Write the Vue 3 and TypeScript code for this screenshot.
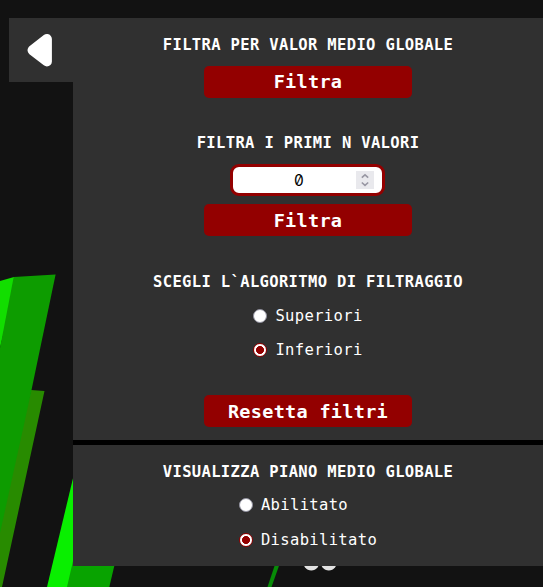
<script setup lang="ts">
import { ref } from 'vue'

const algorithms = ['Superiori', 'Inferiori']
const planeStates = ['Abilitato', 'Disabilitato']
const algorithm = ref('Inferiori')
const plane = ref('Disabilitato')
const count = ref('0')
</script>

<template>
  <main class="page">
    <svg class="scene" viewBox="0 0 543 587" aria-hidden="true">
      <polygon points="0,281 14,277 14,290 0,348" fill="#12de00" />
      <polygon points="31,390 44.5,391 38.2,420 2,587 0,587 0,520" fill="#288b00" />
      <polygon points="13.7,277 55.6,274.5 31.5,390 25,420 0,533 0,348" fill="#0d9c00" />
      <polygon points="74,474 47,587 75,587" fill="#09ef00" />
      <polygon points="73,561 67,587 109.3,587 115,563" fill="#08a300" />
      <polygon points="275.5,563 280,563 271.5,587 267.5,587" fill="#078b07" />
      <ellipse cx="311.3" cy="559.5" rx="9" ry="11" fill="#e2e2e2" />
      <ellipse cx="328.8" cy="559.5" rx="9" ry="11" fill="#e2e2e2" />
    </svg>

    <div class="drawer">
      <button class="toggle" type="button" aria-label="Chiudi">
        <svg width="64" height="64" viewBox="0 0 64 64">
          <path d="M23.5 32.2 37.9 21 37.9 43.4Z" fill="#fff" stroke="#fff" stroke-width="10" stroke-linejoin="round" />
        </svg>
      </button>

      <div class="panel">
        <section class="filters">
          <h2>FILTRA PER VALOR MEDIO GLOBALE</h2>
          <button class="action" type="button">Filtra</button>

          <h2 class="spaced">FILTRA I PRIMI N VALORI</h2>
          <div class="number">
            <input v-model="count" type="text" inputmode="numeric" />
            <span class="spinner">
              <svg width="18" height="18" viewBox="0 0 18 18">
                <path d="M5.8 6.7 9 3.8 12.2 6.7M5.8 11.5 9 14.4 12.2 11.5" fill="none" stroke="#9897a3" stroke-width="1.6" />
              </svg>
            </span>
          </div>
          <button class="action" type="button">Filtra</button>

          <h2 class="spaced algorithm">SCEGLI L`ALGORITMO DI FILTRAGGIO</h2>
          <div class="options">
            <label v-for="item in algorithms" :key="item">
              <input v-model="algorithm" type="radio" name="algorithm" :value="item" />
              <span>{{ item }}</span>
            </label>
          </div>
          <button class="action reset" type="button">Resetta filtri</button>
        </section>

        <section class="plane">
          <h2>VISUALIZZA PIANO MEDIO GLOBALE</h2>
          <div class="options">
            <label v-for="item in planeStates" :key="item">
              <input v-model="plane" type="radio" name="plane" :value="item" />
              <span>{{ item }}</span>
            </label>
          </div>
        </section>
      </div>
    </div>
  </main>
</template>

<style>
body {
  background: #121212;
}
</style>

<style scoped>
.page {
  position: relative;
  box-sizing: border-box;
  height: 587px;
  padding: 18px 0 0 9px;
  overflow: hidden;
  background: #121212;
  color: #fff;
  font-family: "DejaVu Sans Mono", monospace;
}
.scene {
  position: absolute;
  inset: 0;
  width: 543px;
  height: 587px;
}
.drawer {
  position: relative;
  display: flex;
  align-items: flex-start;
}
.toggle {
  flex: none;
  width: 64px;
  height: 64px;
  padding: 0;
  border: 0;
  background: #303030;
}
.toggle svg {
  display: block;
}
.panel {
  flex: 1;
  height: 548px;
  background: #303030;
}
section {
  display: flex;
  flex-direction: column;
  align-items: center;
}
.filters {
  box-sizing: border-box;
  height: 427px;
  padding-top: 16px;
  border-bottom: 5px solid #000;
}
.plane {
  padding-top: 16px;
}
h2 {
  margin: 0;
  height: 22px;
  font-size: 15.5px;
  line-height: 22px;
  font-weight: 700;
  letter-spacing: 0.35px;
  white-space: pre;
}
.action {
  width: 208px;
  height: 32px;
  margin-top: 10px;
  padding: 0 0 1px;
  border: 0;
  border-radius: 5px;
  background: #930000;
  color: #fff;
  font: 700 18.5px/31px "DejaVu Sans Mono", monospace;
  letter-spacing: 0.3px;
}
.spaced {
  margin-top: 34px;
}
.spaced.algorithm {
  margin-top: 35px;
}
.number {
  box-sizing: border-box;
  display: flex;
  align-items: center;
  width: 155px;
  height: 32px;
  margin: 10px 1px 0 0;
  padding-right: 8px;
  border: 3px solid #930000;
  border-radius: 9px;
  background: #fff;
}
.number + .action {
  margin-top: 8px;
  padding: 1px 0 0;
}
.number input {
  flex: 1;
  min-width: 0;
  height: 24px;
  padding: 0 0 0 9px;
  box-sizing: border-box;
  border: 0;
  outline: 0;
  background: transparent;
  color: #000;
  text-align: center;
  font: 15.5px Inter, sans-serif;
  font-feature-settings: "zero" 1;
}
.spinner {
  width: 18px;
  height: 18px;
  background: #e9e9ed;
}
.spinner svg {
  display: block;
}
.options {
  display: grid;
  row-gap: 12px;
  margin-top: 12px;
}
.plane .options {
  row-gap: 13px;
  margin-top: 11px;
}
label {
  display: flex;
  align-items: center;
  gap: 8px;
  height: 22px;
  font-size: 15.5px;
  line-height: 22px;
  letter-spacing: 0.35px;
}
label input {
  appearance: none;
  box-sizing: border-box;
  width: 14px;
  height: 14px;
  margin: 0;
  border: 1px solid #8f8f9d;
  border-radius: 50%;
  background: #fff;
}
label input:checked {
  border-color: #930000;
  background: radial-gradient(circle, #930000 3.7px, #fff 4.3px);
}
.action.reset {
  margin-top: 34px;
  padding: 1px 0 0;
}
</style>
